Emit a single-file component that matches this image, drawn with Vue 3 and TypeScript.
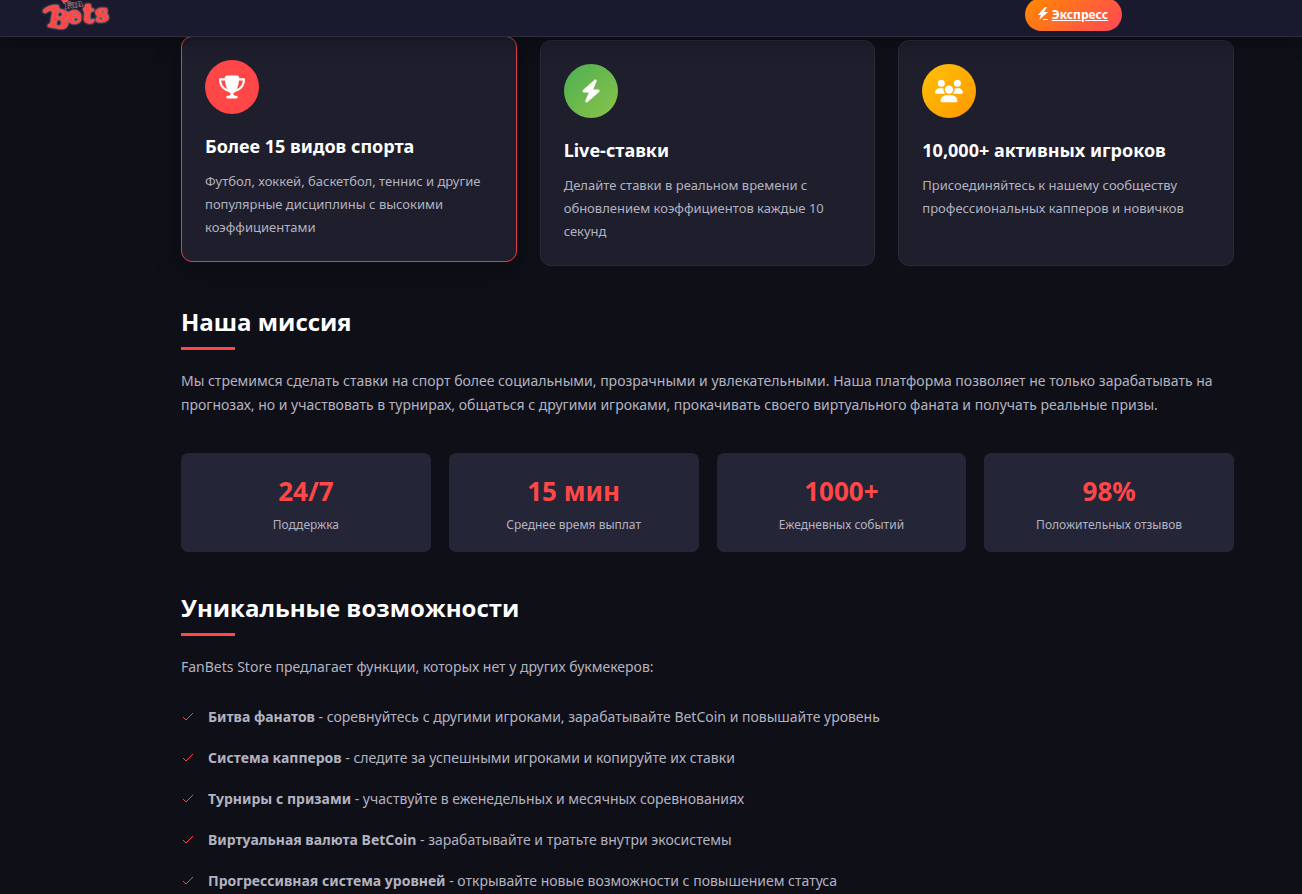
<script setup lang="ts">
interface Feature {
  id: string
  tone: string
  viewBox: string
  iconWidth: number
  path: string
  title: string
  text: string
  active?: boolean
}

const boltPath =
  'M349.400 44.600c5.900-13.700 1.500-29.700-10.600-38.500s-28.600-8-39.900 1.800l-256 224c-10 8.800-13.600 22.900-8.900 35.300S50.700 288 64 288h111.500L98.600 467.400c-5.900 13.700-1.500 29.700 10.600 38.500s28.600 8 39.900-1.800l256-224c10-8.800 13.600-22.900 8.900-35.300S397.300 224 384 224H272.500L349.400 44.600z'

const features: Feature[] = [
  {
    id: 'sports',
    tone: 'red',
    viewBox: '0 0 576 512',
    iconWidth: 26,
    path: 'M400 0H176c-26.500 0-48.100 21.800-47.100 48.200.2 5.300.4 10.600.7 15.800H24C10.700 64 0 74.700 0 88c0 92.600 33.500 157 78.500 200.700 44.300 43.100 98.300 64.800 138.100 75.800 23.400 6.500 39.400 26 39.400 45.600 0 20.900-17 37.900-37.900 37.900H192c-17.700 0-32 14.300-32 32s14.300 32 32 32h192c17.700 0 32-14.300 32-32s-14.300-32-32-32h-26.100c-20.900 0-37.900-17-37.900-37.900 0-19.600 15.900-39.200 39.400-45.600 39.900-11 93.900-32.700 138.200-75.800C542.500 245 576 180.600 576 88c0-13.300-10.700-24-24-24H446.400c.3-5.200.5-10.400.7-15.800C448.100 21.800 426.500 0 400 0zM48.900 112h84.400c9.100 90.100 29.200 150.300 51.900 190.600-24.900-11-50.800-26.500-73.200-48.300-32-31.100-58-76-63.100-142.300zM464.100 254.300c-22.400 21.800-48.300 37.300-73.200 48.300 22.700-40.300 42.800-100.500 51.900-190.600h84.400c-5.100 66.300-31.100 111.200-63.100 142.300z',
    title: 'Более 15 видов спорта',
    text: 'Футбол, хоккей, баскетбол, теннис и другие популярные дисциплины с высокими коэффициентами',
    active: true,
  },
  {
    id: 'live',
    tone: 'green',
    viewBox: '0 0 448 512',
    iconWidth: 20,
    path: boltPath,
    title: 'Live-ставки',
    text: 'Делайте ставки в реальном времени с обновлением коэффициентов каждые 10 секунд',
  },
  {
    id: 'players',
    tone: 'amber',
    viewBox: '0 0 640 512',
    iconWidth: 28,
    path: 'M144 0a80 80 0 1 1 0 160A80 80 0 1 1 144 0zM512 0a80 80 0 1 1 0 160A80 80 0 1 1 512 0zM0 298.700C0 239.800 47.800 192 106.700 192h42.700c15.900 0 31 3.500 44.600 9.700-1.300 7.200-1.900 14.700-1.900 22.300 0 38.200 16.800 72.500 43.300 96H21.300C9.600 320 0 310.400 0 298.700zM405.300 320h-.7c26.600-23.500 43.300-57.800 43.300-96 0-7.600-.7-15-1.900-22.300 13.600-6.300 28.700-9.700 44.600-9.700h42.700C592.200 192 640 239.800 640 298.700c0 11.800-9.600 21.300-21.300 21.300H405.300zM224 224a96 96 0 1 1 192 0 96 96 0 1 1-192 0zM128 485.300C128 411.700 187.700 352 261.300 352h117.300C452.300 352 512 411.700 512 485.300c0 14.700-11.900 26.700-26.700 26.700H154.600c-14.700 0-26.700-11.900-26.700-26.700z',
    title: '10,000+ активных игроков',
    text: 'Присоединяйтесь к нашему сообществу профессиональных капперов и новичков',
  },
]

const stats = [
  { value: '24/7', label: 'Поддержка' },
  { value: '15 мин', label: 'Среднее время выплат' },
  { value: '1000+', label: 'Ежедневных событий' },
  { value: '98%', label: 'Положительных отзывов' },
]

const perks = [
  { name: 'Битва фанатов', text: 'соревнуйтесь с другими игроками, зарабатывайте BetCoin и повышайте уровень' },
  { name: 'Система капперов', text: 'следите за успешными игроками и копируйте их ставки' },
  { name: 'Турниры с призами', text: 'участвуйте в еженедельных и месячных соревнованиях' },
  { name: 'Виртуальная валюта BetCoin', text: 'зарабатывайте и тратьте внутри экосистемы' },
  { name: 'Прогрессивная система уровней', text: 'открывайте новые возможности с повышением статуса' },
]
</script>

<template>
  <div class="page">
    <header class="topbar">
      <a class="logo" href="#" aria-label="FanBets">
        <svg width="76" height="36" viewBox="0 0 76 36" aria-hidden="true">
          <path class="logo-hand" d="M21 0l3 4 5-4z" />
          <text class="logo-fan" x="25" y="9" transform="rotate(-10 25 9)">Fan</text>
          <g class="logo-bets">
            <path d="M5 11q5-4 12-4" />
            <text x="7" y="26" font-size="25" transform="rotate(10 7 26)">B</text>
            <text x="28" y="24" font-size="23" transform="rotate(-8 28 24)">e</text>
            <text x="42" y="22" font-size="26" transform="rotate(4 42 22)">t</text>
            <text x="56" y="22" font-size="24" transform="rotate(-6 56 22)">s</text>
          </g>
        </svg>
      </a>
      <a class="express" href="#">
        <svg class="express-icon" width="13" height="14" viewBox="0 0 13 14" aria-hidden="true">
          <path d="M8 0L1 8H4L2 13L11 5H7L10 0z" />
          <path d="M6 12H11V13H6z" />
        </svg>
        <span>Экспресс</span>
      </a>
    </header>

    <main class="content">
      <section class="features">
        <article v-for="f in features" :key="f.id" class="card" :class="{ active: f.active }">
          <div class="badge" :class="f.tone">
            <svg :width="f.iconWidth" height="24" :viewBox="f.viewBox" aria-hidden="true">
              <path :d="f.path" />
            </svg>
          </div>
          <h3>{{ f.title }}</h3>
          <p>{{ f.text }}</p>
        </article>
      </section>

      <section class="block">
        <h2>Наша миссия</h2>
        <p class="lead">
          Мы стремимся сделать ставки на спорт более социальными, прозрачными и увлекательными. Наша
          платформа позволяет не только зарабатывать на прогнозах, но и участвовать в турнирах, общаться с
          другими игроками, прокачивать своего виртуального фаната и получать реальные призы.
        </p>
        <div class="stats">
          <div v-for="s in stats" :key="s.label" class="stat">
            <div class="value">{{ s.value }}</div>
            <div class="label">{{ s.label }}</div>
          </div>
        </div>
      </section>

      <section class="block">
        <h2>Уникальные возможности</h2>
        <p class="lead">FanBets Store предлагает функции, которых нет у других букмекеров:</p>
        <ul class="perks">
          <li v-for="p in perks" :key="p.name">
            <svg width="14" height="14" viewBox="0 0 14 14" aria-hidden="true">
              <path d="M2 7L5 10L12 3" />
            </svg>
            <span><strong>{{ p.name }}</strong> - {{ p.text }}</span>
          </li>
        </ul>
      </section>
    </main>
  </div>
</template>

<style>
body {
  background: #0f0f18;
}
</style>

<style scoped>
.page {
  height: 100vh;
  overflow: hidden;
  background: #0f0f18;
  color: #b3b3c0;
  font-family: 'Noto Sans', 'Open Sans', sans-serif;
  font-size: 14px;
}

.topbar {
  position: relative;
  z-index: 2;
  box-sizing: border-box;
  display: flex;
  align-items: flex-start;
  justify-content: space-between;
  height: 37px;
  padding: 0 180px 0 40px;
  background: #1a1a2e;
  border-bottom: 1px solid #2d2d3d;
  box-shadow: 0 4px 20px rgba(0, 0, 0, 0.3);
}

.logo {
  display: block;
  height: 36px;
}

.logo-bets {
  filter: drop-shadow(0 0 1px #e8c8c8);
}

.logo-bets text {
  fill: #ff4747;
  stroke: #ff4747;
  stroke-width: 1px;
  stroke-linejoin: round;
  font-family: 'DejaVu Serif', serif;
  font-weight: 700;
}

.logo-bets path {
  fill: none;
  stroke: #ff4747;
  stroke-width: 4px;
  stroke-linecap: round;
}

.logo-fan {
  fill: #2a2030;
  stroke: #b08080;
  stroke-width: 1px;
  paint-order: stroke;
  font-family: 'DejaVu Serif', serif;
  font-weight: 700;
  font-size: 9px;
}

.logo-hand {
  fill: #ff4747;
}

.express {
  box-sizing: border-box;
  display: flex;
  align-items: flex-end;
  gap: 2px;
  height: 33px;
  margin-top: -2px;
  padding: 0 14px 7px 12px;
  border-radius: 17px;
  background: linear-gradient(135deg, #ff8a00, #ff4757);
  color: #fff;
  font-size: 12px;
  font-weight: 700;
  line-height: 18px;
}

.express-icon {
  margin-bottom: 3px;
  fill: currentColor;
}

.content {
  margin-left: 113px;
  padding: 3px 68px 0;
}

.features {
  display: grid;
  grid-template-columns: repeat(3, 1fr);
  gap: 23px;
}

.card {
  padding: 23px 23px 22px;
  border: 1px solid #2a2a3a;
  border-radius: 11px;
  background: #1e1e2d;
}

.card.active {
  transform: translateY(-4px);
  border-color: #e04045;
  box-shadow: 0 9px 27px rgba(0, 0, 0, 0.3);
}

.badge {
  display: flex;
  align-items: center;
  justify-content: center;
  width: 54px;
  height: 54px;
  margin-bottom: 20px;
  border-radius: 50%;
}

.badge svg {
  fill: #fff;
}

.badge.red {
  background: #ff4747;
}

.badge.green {
  background: linear-gradient(135deg, #4caf50, #8bc34a);
}

.badge.amber {
  background: linear-gradient(135deg, #ffc107, #ff9800);
}

h3 {
  margin: 0 0 12px;
  color: #fff;
  font-size: 18px;
  font-weight: 700;
  line-height: 24px;
}

.card p {
  margin: 0;
  font-size: 13px;
  line-height: 23px;
}

.block {
  margin-top: 40px;
}

h2 {
  margin: 0 0 19px;
  color: #fff;
  font-family: 'Open Sans', 'Noto Sans', sans-serif;
  font-size: 24px;
  font-weight: 700;
  line-height: 32px;
}

h2::after {
  content: '';
  display: block;
  width: 54px;
  height: 3px;
  margin-top: 9px;
  background: #ff4747;
}

.lead {
  margin: 0;
  line-height: 24px;
}

.stats {
  display: grid;
  grid-template-columns: repeat(4, 1fr);
  gap: 18px;
  margin-top: 36px;
}

.stat {
  padding: 18px 18px 17px;
  border-radius: 7px;
  background: #252538;
  text-align: center;
}

.value {
  margin-bottom: 4px;
  color: #ff4747;
  font-size: 26px;
  font-weight: 700;
  line-height: 40px;
}

.label {
  font-size: 12px;
  line-height: 20px;
}

.perks {
  margin: 17px 0 0;
  padding: 0;
  list-style: none;
}

.perks li {
  display: flex;
  align-items: center;
  gap: 13px;
  line-height: 41px;
}

.perks svg {
  fill: none;
  stroke: #ff4747;
  stroke-width: 1px;
}
</style>
